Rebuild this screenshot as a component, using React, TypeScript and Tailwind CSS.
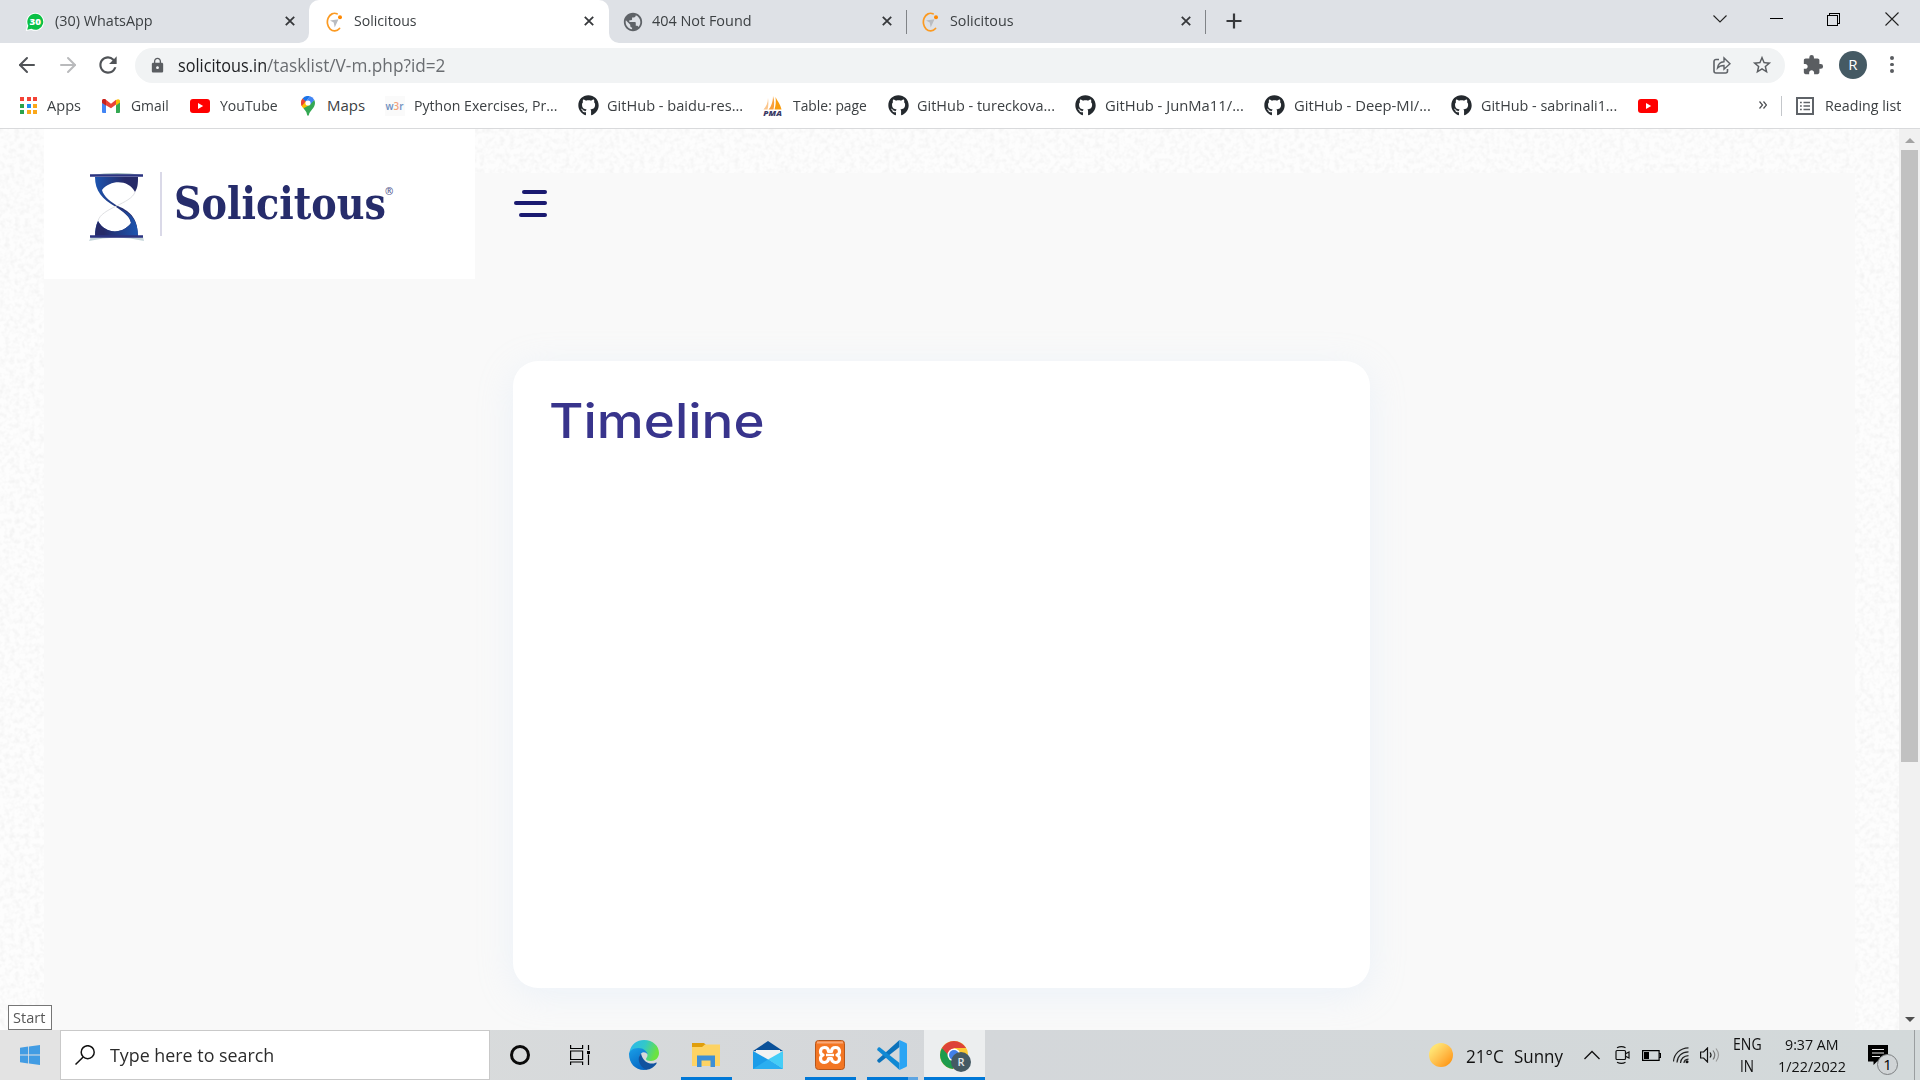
import React, { useLayoutEffect, useRef, type ReactNode } from "react";
import { ArrowLeft, ArrowRight } from "lucide-react";
import { FaGithub } from "react-icons/fa";
import { MdLock, MdStarBorder, MdExtension, MdRefresh, MdPublic } from "react-icons/md";

/** Single line of text stretched horizontally to fill the width of its box. */
function Fit({ children, className = "" }: { children: ReactNode; className?: string }) {
  const box = useRef<HTMLDivElement>(null);
  const text = useRef<HTMLSpanElement>(null);
  useLayoutEffect(() => {
    const apply = () => {
      if (!box.current || !text.current) return;
      const ratio = box.current.clientWidth / text.current.offsetWidth;
      text.current.style.transform = `scaleX(${ratio})`;
    };
    apply();
    document.fonts?.ready.then(apply);
  }, []);
  return (
    <div ref={box} className={`shrink-0 whitespace-nowrap ${className}`}>
      <span ref={text} className="inline-block origin-left">
        {children}
      </span>
    </div>
  );
}

const WhatsAppIcon = () => (
  <svg viewBox="0 0 20 20" className="size-5">
    <path d="M10.3 0.8a9 9 0 0 0-8.2 12.800L0.800 19l5.400-1.100A9 9 0 1 0 10.300 0.800z" fill="#fff" />
    <path d="M10.300 1.800a8 8 0 0 0-7 11.900L2.200 17.800l4.200-1A8 8 0 1 0 10.300 1.800z" fill="#0ac045" />
    <text x="10.300" y="13" textAnchor="middle" fontFamily="Open Sans, sans-serif" fontWeight="800" fontSize="9.500" textLength="11.500" lengthAdjust="spacingAndGlyphs" fill="#fff">30</text>
  </svg>
);

const SolicitousIcon = () => (
  <svg viewBox="0 0 18 20" className="h-5 w-[18px]">
    <path d="M13.500 16.500A7.200 8.800 0 1 1 11 1.800" fill="none" stroke="#fb9a22" strokeWidth="1.700" strokeLinecap="round" />
    <circle cx="14" cy="5.300" r="2" fill="#ff8800" />
    <path d="M4 8.500l8.500-1.200-3.800 8.200-1-5z" fill="#b9bcc1" />
  </svg>
);

const CloseX = () => (
  <svg viewBox="0 0 10 10" className="size-[10px]">
    <path d="M0.800 0.800l8.400 8.400M9.200 0.800L0.800 9.200" stroke="#36383b" strokeWidth="1.800" />
  </svg>
);

const GmailIcon = () => (
  <svg viewBox="0 0 18 14" className="h-[14px] w-[18px]">
    <path d="M0 2v11a1 1 0 0 0 1 1h3V5z" fill="#4285f4" />
    <path d="M18 2v11a1 1 0 0 1-1 1h-3V5z" fill="#34a853" />
    <path d="M0 2C0 0 2 -0.500 3.600 0.600L9 4.800l5-4v4.600L9 9.300 0 4z" fill="#ea4335" />
    <path d="M0 2C0 0.500 1.500-0.200 3-0.100L4 1v5.400L0 3.600z" fill="#c5221f" />
    <path d="M14 1c2-1.600 4-0.700 4 1v1.600l-4 3z" fill="#fbbc04" />
  </svg>
);

const YouTubeIcon = () => (
  <svg viewBox="0 0 20 14" className="h-[14px] w-5">
    <rect width="20" height="14" rx="3" fill="#f00" />
    <path d="M8 4v6l5.200-3z" fill="#fff" />
  </svg>
);

const MapsIcon = () => (
  <svg viewBox="0 0 14 20" className="h-5 w-[14px]">
    <path d="M2 11.500C3.500 14 5.500 15 6 18.500c.300 1.600 1.700 1.600 2 0C8.500 15 14 12 14 7c0-1.200-.300-2.200-.700-3.100z" fill="#34a853" />
    <path d="M1.400 2.800A7 7 0 0 0 0 7c0 1.800.800 3.300 2 4.600L7 7z" fill="#fbbc04" />
    <path d="M1.600 2.500A7 7 0 0 0 .800 10.200L5 5z" fill="#ea4335" />
    <path d="M1.600 2.500A7 7 0 0 1 9 .300L4.800 5.400z" fill="#1a73e8" />
    <path d="M9 .300a7 7 0 0 1 4.300 3.600L9 8.800 5 5z" fill="#4285f4" />
    <path d="M.900 10.200a12 12 0 0 0 1.600 2L9 8.700 5 5.200z" fill="#fbbc04" />
    <circle cx="7" cy="7" r="2.600" fill="#fff" />
  </svg>
);

const AppsIcon = () => (
  <div className="grid h-[17px] w-[17px] grid-cols-3 grid-rows-3 gap-[2.500px]">
    <i className="bg-[#f44336]" /><i className="bg-[#f44336]" /><i className="bg-[#f44336]" />
    <i className="bg-[#2ba24c]" /><i className="bg-[#1e8cf5]" /><i className="bg-[#fba81a]" />
    <i className="bg-[#2ba24c]" /><i className="bg-[#fba81a]" /><i className="bg-[#fba81a]" />
  </div>
);

const W3rIcon = () => (
  <svg viewBox="0 0 20 20" className="size-5">
    <rect width="20" height="20" fill="#fafafa" />
    <text x="0.500" y="13.500" fontFamily="Open Sans, sans-serif" fontWeight="600" fontSize="10.500" textLength="18" lengthAdjust="spacingAndGlyphs" fill="#6d8fc0">
      w<tspan fill="#f2a27c">3</tspan>r
    </text>
  </svg>
);

const PmaIcon = () => (
  <svg viewBox="0 0 20 22" className="h-[22px] w-5">
    <path d="M5 3C5 8 3 12 0.500 14.500h4C5.500 11 5.600 7 5 3z" fill="#fbc58b" />
    <path d="M10 1C10 7 8 12 5.500 14.500h5C11.500 10 11.500 5 10 1z" fill="#f9a03c" />
    <path d="M12.500 2c2 4.500 4.500 6 6 12.500h-7c1.300-4 1.600-8 1-12.500z" fill="#f89c0e" />
    <text x="0.300" y="20.500" fontFamily="Open Sans, sans-serif" fontWeight="800" fontStyle="italic" fontSize="7.500" textLength="18.500" lengthAdjust="spacingAndGlyphs" fill="#3b3b66">PMA</text>
  </svg>
);

const GitHubIcon = () => <FaGithub className="size-[21px] -mr-px text-[#24292e]" />;

type Tab = { icon: ReactNode; title: string; cell: string; text: string; close: string };
const tabs: Tab[] = [
  { icon: <WhatsAppIcon />, title: "(30) WhatsApp", cell: "w-[309px] pl-[25px]", text: "ml-[10px] w-[98px]", close: "mr-[14px]" },
  { icon: <SolicitousIcon />, title: "Solicitous", cell: "w-[300px] rounded-t-[10px] bg-white pl-[17px]", text: "ml-[10px] w-[63px]", close: "mr-[15px]" },
  { icon: <MdPublic className="-ml-px size-[22px] text-[#5f6368]" />, title: "404 Not Found", cell: "w-[297px] pl-[14px]", text: "ml-[8px] w-[100px]", close: "mr-[14px]" },
  { icon: <SolicitousIcon />, title: "Solicitous", cell: "w-[299px] pl-[16px]", text: "ml-[10px] w-[64px]", close: "mr-[14px]" },
];

type Bookmark = { icon: ReactNode; label: string; cell: string; text: string };
const bookmarks: Bookmark[] = [
  { icon: <AppsIcon />, label: "Apps", cell: "w-[82px]", text: "ml-[10px] w-[34px]" },
  { icon: <GmailIcon />, label: "Gmail", cell: "w-[88px]", text: "ml-[11px] w-[38px]" },
  { icon: <YouTubeIcon />, label: "YouTube", cell: "w-[111px]", text: "ml-[10px] w-[58px]" },
  { icon: <MapsIcon />, label: "Maps", cell: "w-[84px]", text: "ml-[12px] w-[38px]" },
  { icon: <W3rIcon />, label: "Python Exercises, Pr...", cell: "w-[193px]", text: "ml-[9px] w-[143px]" },
  { icon: <GitHubIcon />, label: "GitHub - baidu-res...", cell: "w-[185px]", text: "ml-[9px] w-[136px]" },
  { icon: <PmaIcon />, label: "Table: page", cell: "w-[125px]", text: "ml-[10px] w-[74px]" },
  { icon: <GitHubIcon />, label: "GitHub - tureckova...", cell: "w-[187px]", text: "ml-[9px] w-[138px]" },
  { icon: <GitHubIcon />, label: "GitHub - JunMa11/...", cell: "w-[189px]", text: "ml-[10px] w-[139px]" },
  { icon: <GitHubIcon />, label: "GitHub - Deep-MI/...", cell: "w-[187px]", text: "ml-[10px] w-[137px]" },
  { icon: <GitHubIcon />, label: "GitHub - sabrinali1...", cell: "w-[187px]", text: "ml-[10px] w-[136px]" },
];

function TabStrip() {
  return (
    <div className="flex h-[43px] bg-[#dee1e6]">
      {tabs.map((t, i) => (
        <React.Fragment key={i}>
          <div className={`relative flex items-center ${t.cell}`}>
            {t.icon}
            <Fit className={`pb-[3px] leading-[40px] ${t.text}`}>{t.title}</Fit>
            <span className={`ml-auto pb-px ${t.close}`}><CloseX /></span>
            {i === 1 && (
              <>
                <svg viewBox="0 0 10 10" className="absolute -left-[10px] bottom-0 size-[10px]"><path d="M10 0v10H0A10 10 0 0 0 10 0z" fill="#fff" /></svg>
                <svg viewBox="0 0 10 10" className="absolute -right-[10px] bottom-0 size-[10px]"><path d="M0 0v10h10A10 10 0 0 1 0 0z" fill="#fff" /></svg>
              </>
            )}
          </div>
          {i > 1 && <div className="-mr-px mt-[10px] h-6 w-px bg-[#808387]" />}
        </React.Fragment>
      ))}
      <svg viewBox="0 0 16 16" className="ml-[21px] mt-[13px] size-4"><path d="M8 0.500v15M0.500 8h15" stroke="#36383b" strokeWidth="2.200" /></svg>
      <div className="ml-auto mr-[21px] flex h-[38px] items-center gap-[44px]">
        <svg viewBox="0 0 14 14" className="mr-[-1px] size-[14px]"><path d="M0.500 3.500L7 10l6.500-6.500" fill="none" stroke="#222" strokeWidth="1.100" /></svg>
        <svg viewBox="0 0 13 14" className="h-[14px] w-[13px]"><path d="M0 6.500h13" stroke="#000" /></svg>
        <svg viewBox="0 0 14 14" className="h-[14px] w-[14px] [shape-rendering:crispEdges]"><path d="M0.500 3.500h10v10h-10zM2.500 3V1.500h10v10H11" fill="none" stroke="#000" /></svg>
        <svg viewBox="0 0 14 14" className="size-[14px]"><path d="M0.500 0.500l13 13M13.500 0.500l-13 13" stroke="#222" strokeWidth="1.100" /></svg>
      </div>
    </div>
  );
}

function AddressBar() {
  return (
    <div className="flex h-[45px] items-center pl-[15px]">
      <ArrowLeft className="mb-[2px] size-[24px] text-[#505357]" strokeWidth={2} />
      <ArrowRight className="mb-[2px] ml-[17px] size-[24px] text-[#b9babc]" strokeWidth={2} />
      <MdRefresh className="mb-[2px] ml-[15px] size-[26px] text-[#505357]" />
      <div className="ml-[14px] flex h-[35px] w-[1650px] items-center rounded-full bg-[#f1f3f4] pl-[14px]">
        <MdLock className="size-[17px] text-[#5a5d61]" />
        <div className="ml-[12px] flex pb-px text-[17.500px] leading-[34px]">
          <Fit className="w-[89px] text-[#202124]">solicitous.in</Fit>
          <Fit className="w-[178px] text-[#6a6d71]">/tasklist/V-m.php?id=2</Fit>
        </div>
        <svg viewBox="0 0 18 18" className="mb-[2px] ml-auto size-[18px]" fill="none" stroke="#5f6368" strokeWidth="1.600">
          <path d="M6 3.500H3a2 2 0 0 0-2 2v9.500a2 2 0 0 0 2 2h9.500a2 2 0 0 0 2-2V13" />
          <path d="M4.500 12c.500-4 2.500-6 6.500-6.300V2l6 5.700-6 5.500V9.500C8 9.500 6 10.300 4.500 12z" strokeWidth="1.400" />
        </svg>
        <MdStarBorder className="mb-px ml-[20px] mr-[12px] size-[22px] text-[#5a5d61]" />
      </div>
      <MdExtension className="mb-px ml-[17px] size-[22px] text-[#5a5d61]" />
      <div className="mb-[2px] ml-[15px] flex size-[28px] items-center justify-center rounded-full bg-[#455a64] text-[15px] text-white">R</div>
      <div className="mb-[2px] ml-[23px] flex flex-col gap-[3px]">
        <i className="size-[3.500px] rounded-full bg-[#5a5d61]" />
        <i className="size-[3.500px] rounded-full bg-[#5a5d61]" />
        <i className="size-[3.500px] rounded-full bg-[#5a5d61]" />
      </div>
    </div>
  );
}

function BookmarksBar() {
  return (
    <div className="flex h-[41px] items-center border-b border-[#d9dadc] pb-[5px] pl-[20px] text-[#3c4043]">
      {bookmarks.map((b) => (
        <div key={b.label} className={`flex h-[22px] shrink-0 items-center ${b.cell}`}>
          {b.icon}
          <Fit className={`pb-[2px] leading-5 ${b.text}`}>{b.label}</Fit>
        </div>
      ))}
      <YouTubeIcon />
      <svg viewBox="0 0 8 8" className="mb-[2px] ml-[101px] size-2"><path d="M0.500 0.500L3.500 4l-3 3.500M4.500 0.500L7.500 4l-3 3.500" fill="none" stroke="#4a4d51" strokeWidth="1.200" /></svg>
      <div className="ml-[14px] h-5 w-px bg-[#c4c7cb]" />
      <svg viewBox="0 0 18 18" className="ml-[14px] size-[18px]" fill="none" stroke="#5f6368">
        <rect x="1" y="1" width="16" height="16" strokeWidth="2" />
        <path d="M4 5.500h1.800M4 9h1.800M4 12.500h1.800M7.500 5.500H14M7.500 9H14M7.500 12.500H14" strokeWidth="1.700" />
      </svg>
      <Fit className="ml-[11px] w-[76px] pb-[2px] leading-5">Reading list</Fit>
    </div>
  );
}

function Logo() {
  return (
    <div className="flex h-[150px] w-[431px] shrink-0 bg-white pl-[45px] pt-[43px]">
      <svg viewBox="0 0 56 70" className="h-[70px] w-[56px]">
        <defs>
          <linearGradient id="top"><stop offset="0" stopColor="#1c55b0" /><stop offset="0.700" stopColor="#262a68" /></linearGradient>
          <linearGradient id="bottom"><stop offset="0.200" stopColor="#262a68" /><stop offset="1" stopColor="#1c55b0" /></linearGradient>
        </defs>
        <path d="M2 3Q28-1 54 3z" fill="#9db8bb" />
        <path d="M0 69l2-4h52l1 4Q28 62 0 69z" fill="#c5d6da" />
        <path d="M6 5h43c0 6 0 10-3 15-6-12-24-13-33-2 1 6 10 13 16 16 14 6 20 14 20 31H6c0-7 1-12 3-16 8 14 25 13 33 2-1-7-9-12-15-16C13 27 6 19 6 5z" fill="url(#top)" />
        <path d="M6 65c0-7 1-12 3-16 8 14 25 13 33 2-1-7-7-11-12-14.500C43 41 49 49 49 65z" fill="url(#bottom)" />
        <path d="M46 20C42 32 12 36 9 49" fill="none" stroke="#dfe0e3" />
        <path d="M1 3.500h53M1 64.500h53" stroke="#2c3481" strokeWidth="2.400" />
      </svg>
      <div className="ml-[15px] h-[64px] w-[2px] bg-[#dad9e8]" />
      <Fit className="ml-[12px] w-[212px] pt-[6px] font-['DejaVu_Serif'] text-[45px] font-bold leading-[52px] text-[#262c6b]">Solicitous</Fit>
      <div className="-ml-px pt-[13px] text-[10px] font-semibold leading-[13px] text-[#50548a]">®</div>
    </div>
  );
}

function Page() {
  return (
    <main className="flex h-[901px] overflow-hidden">
      <div className="relative flex-1 bg-[#fdfdfd]">
        <svg className="absolute inset-0 size-full">
          <filter id="grain" x="0" y="0" width="100%" height="100%">
            <feTurbulence type="fractalNoise" baseFrequency="0.200" numOctaves="2" seed="4" />
            <feColorMatrix values="0 0 0 0 0  0 0 0 0 0  0 0 0 0 0  0.080 0 0 0 -0.032" />
          </filter>
          <rect width="100%" height="100%" filter="url(#grain)" />
        </svg>
        <div className="relative mx-[44px] flex h-full flex-col">
          <div className="flex h-[150px]">
            <Logo />
            <div className="mt-[44px] flex flex-1 flex-col bg-[#f9f9f9] pl-[39px] pt-[17px]">
              <div className="flex w-[33px] flex-col items-end gap-[7px]">
                <i className="h-[4px] w-[25px] rounded-full bg-[#1a1a70]" />
                <i className="h-[4px] w-[33px] rounded-full bg-[#1a1a70]" />
                <i className="mt-px h-[4px] w-[28px] rounded-full bg-[#1a1a70]" />
              </div>
            </div>
          </div>
          <div className="flex-1 bg-[#f9f9f9] pl-[469px] pt-[82px]">
            <section className="h-[627px] w-[857px] rounded-[25px] bg-white pl-[36px] pt-[25px] shadow-[0_7px_35px_rgba(200,225,250,0.250)]">
              <Fit className="w-[216px] font-['Inter'] text-[48px] font-medium leading-[69px] text-[#38348c]">Timeline</Fit>
            </section>
          </div>
        </div>
      </div>
      <div className="flex w-[21px] flex-col items-center bg-[#f1f1f1]">
        <svg viewBox="0 0 10 5" className="mt-[9px] h-[5px] w-[10px]"><path d="M5 0l5 5H0z" fill="#a3a3a3" /></svg>
        <div className="mt-[7px] h-[612px] w-[17px] bg-[#c1c1c1]" />
        <svg viewBox="0 0 10 5" className="mb-[8px] mt-auto h-[5px] w-[10px]"><path d="M0 0h10L5 5z" fill="#505050" /></svg>
      </div>
    </main>
  );
}

const EdgeIcon = () => (
  <svg viewBox="0 0 30 30" className="size-[30px]">
    <defs>
      <linearGradient id="edgeA" x1="0" y1="0" x2="1" y2="0.300"><stop offset="0" stopColor="#2bb6f0" /><stop offset="0.550" stopColor="#33c8c8" /><stop offset="1" stopColor="#6be33f" /></linearGradient>
      <linearGradient id="edgeB" x1="0" y1="0" x2="0.500" y2="1"><stop offset="0" stopColor="#1aa0e8" /><stop offset="1" stopColor="#0668c4" /></linearGradient>
    </defs>
    <path d="M0.500 12C2 4 8 0 15 0c9 0 15 6 15 13 0 5-4 8-8 8-3.500 0-5-1-5-2 0-1 1.500-1.600 1.500-4C18.500 12 15 9 10 9c-4 0-8 1.500-9.500 3z" fill="url(#edgeA)" />
    <path d="M0 14c0-3 4-6 9.500-6 5 0 9 3.500 9 6.500C17 12 14 11.500 12 13.500c-4 4-1.500 13 7 15.500-1.300.700-2.700 1-4 1C6 30 0 23 0 14z" fill="url(#edgeB)" />
    <path d="M12 13.500C8 17 9 26 17 29.700c5 0 8.500-3 10.500-6.200.500-.800-.200-1.200-.800-.800C22 25 14 23 12 13.500z" fill="#10529f" />
  </svg>
);

const FolderIcon = () => (
  <svg viewBox="0 0 28 24" className="h-6 w-7">
    <path d="M0 0h12l2 2v3H0z" fill="#e09e0c" />
    <path d="M0 4h10l3-2.500h15V23H0z" fill="#fdd364" />
    <path d="M5 24V12.500h18V24h-4.500v-6.500h-9V24z" fill="#3d8fd6" />
  </svg>
);

const MailIcon = () => (
  <svg viewBox="0 0 30 28" className="h-7 w-[30px]">
    <path d="M0 10L15 0l15 10z" fill="#0a5199" />
    <path d="M3 9h24v10H3z" fill="#f2f2f2" />
    <path d="M0 10l15 8.500L30 28H0z" fill="#1b9ce8" />
    <path d="M30 10v18L15 18.500z" fill="#45cdf7" />
    <path d="M0 28l15-9.500L30 28z" fill="#2aaef0" />
  </svg>
);

const XamppIcon = () => (
  <svg viewBox="0 0 30 30" className="size-[30px]">
    <rect x="0.500" y="0.500" width="29" height="29" rx="3" fill="#f37623" stroke="#b5561c" />
    <path d="M2 2.500h26" stroke="#f8a878" strokeWidth="2" />
    <path d="M9.500 7.500c3 0 4 2 4 4h3c0-2 1-4 4-4s4 2 4 4-1 3-2.500 3.500c1.500.500 2.500 2 2.500 3.700 0 2-1.500 3.800-4 3.800s-4-2-4-4h-3c0 2-1.500 4-4 4s-4-1.800-4-3.800c0-1.700 1-3.200 2.500-3.700-1.500-.500-2.500-1.800-2.500-3.500s1-4 4-4z" fill="none" stroke="#fff" strokeWidth="3.200" strokeLinejoin="round" />
    <path d="M11 15h8" stroke="#fff" strokeWidth="2.500" />
  </svg>
);

const VsCodeIcon = () => (
  <svg viewBox="0 0 30 30" className="size-[30px]">
    <path d="M22.500 7L3 22.500c-.600.400-1 .300-1.500-.100L0.500 21.500c-.500-.500-.500-1.200 0-1.700L22.500 0z" fill="#0b72bb" />
    <path d="M22.500 23L3 7.500c-.600-.400-1-.300-1.500.100L0.500 8.500c-.500.500-.500 1.200 0 1.700L22.500 30z" fill="#1089d4" />
    <path d="M22.500 0L29 3c.600.300 1 .800 1 1.500v21c0 .700-.400 1.200-1 1.500l-6.500 3z" fill="#2aa4f4" />
  </svg>
);

const ChromeIcon = () => (
  <svg viewBox="0 0 32 32" className="size-8">
    <circle cx="14" cy="15" r="14" fill="#fcc934" />
    <path d="M14 15L1.900 8A14 14 0 0 0 13 29z" fill="#1e9c4d" />
    <path d="M1.900 8a14 14 0 0 1 24.200 0H14l-5 8z" fill="#dd4338" />
    <circle cx="14" cy="15" r="6.500" fill="#fff" />
    <circle cx="14" cy="15" r="5" fill="#4280ea" />
    <circle cx="21" cy="22" r="10" fill="#455a64" />
    <text x="21" y="26" textAnchor="middle" fontFamily="Open Sans, sans-serif" fontWeight="600" fontSize="11" fill="#e3e7e9">R</text>
  </svg>
);

function Taskbar() {
  return (
    <footer className="relative flex h-[50px] bg-linear-to-r from-[#dcdedd] via-[#d4d7da] to-[#d3d9da]">
      <div className="absolute -top-[25px] left-[8px] flex h-[25px] w-[44px] items-center border border-[#767676] bg-white pl-[4px] text-[#575757]">
        <Fit className="w-[32px]">Start</Fit>
      </div>
      <div className="flex w-[60px] items-center justify-center bg-[#e3e3e3]">
        <svg viewBox="0 0 20 20" className="size-5" fill="#429ce3"><path d="M0 2.800L8.200 1.600v7.900H0zM9 1.500L20 0v9.500H9zM0 10.400h8.200v8L0 17.200zM9 10.400h11V20L9 18.500z" /></svg>
      </div>
      <div className="flex w-[430px] items-center border border-[#c9c9c9] bg-white pl-[14px] text-[18.500px] text-[#2b2b2b]">
        <svg viewBox="0 0 20 20" className="size-5" fill="none" stroke="#111" strokeWidth="1.500"><circle cx="12.700" cy="7.200" r="6.500" /><path d="M8.200 12L0.500 19.500" /></svg>
        <Fit className="ml-[15px] w-[164px] leading-[46px]">Type here to search</Fit>
      </div>
      <div className="flex w-[60px] items-center justify-center"><i className="size-5 rounded-full border-[3px] border-[#0a0a0a]" /></div>
      <div className="flex w-[60px] items-center justify-center">
        <svg viewBox="0 0 20 20" className="size-5" fill="none" stroke="#000" strokeWidth="1.200">
          <path d="M0.600 0v3.500h12V0M0.600 6h12v8.500h-12zM0.600 20v-3h12v3M18.500 0v5M18.500 9.500V20" />
          <rect x="17" y="6" width="3" height="3" fill="#000" stroke="none" />
        </svg>
      </div>
      <div className="flex w-[68px] items-center justify-center"><EdgeIcon /></div>
      <div className="ml-[3px] flex w-[51px] items-center justify-center border-b-[3px] border-[#0078d7] pr-[2px] pt-[2px]"><FolderIcon /></div>
      <div className="flex w-[73px] items-center justify-center pr-[2px]"><MailIcon /></div>
      <div className="flex w-[51px] items-center justify-center border-b-[3px] border-[#0078d7] pr-px pt-[3px]"><XamppIcon /></div>
      <div className="ml-[11px] flex w-[51px] flex-col">
        <div className="flex flex-1 items-center justify-center pr-[2px] pt-[3px]"><VsCodeIcon /></div>
        <div className="flex h-[3px]"><i className="w-[41px] bg-[#0078d7]" /><i className="w-[10px] bg-[#5ea5e2]" /></div>
      </div>
      <div className="ml-[6px] flex w-[61px] items-center border-b-[3px] border-[#0078d7] bg-[#eceeef] pl-[16px] pt-[5px]"><ChromeIcon /></div>

      <div className="ml-auto flex items-center text-[18px] text-[#111]">
        <i className="size-6 rounded-full bg-linear-135 from-[#ffe372] from-20% to-[#fd9500] to-90%" />
        <Fit className="ml-[13px] mt-[3px] w-[38px]">21°C</Fit>
        <Fit className="ml-[10px] mt-[3px] w-[49px]">Sunny</Fit>
        <svg viewBox="0 0 16 10" className="ml-[21px] h-[10px] w-4"><path d="M0.500 9L8 1.500 15.500 9" fill="none" stroke="#111" strokeWidth="1.300" /></svg>
        <svg viewBox="0 0 16 18" className="ml-[15px] h-[18px] w-4" fill="none" stroke="#111" strokeWidth="1.200">
          <rect x="1" y="4.500" width="9.500" height="9" rx="1" /><path d="M10.500 7.800l3.500-1.800v6l-3.500-1.800M2 1.800q4.500-2.300 8.500 0M2 16.200q4.500 2.300 8.500 0" />
        </svg>
        <svg viewBox="0 0 19 11" className="ml-[11px] h-[11px] w-[19px]"><path d="M0.600 0.600h16.500v9.800H0.600zM17 3.500h1.500v4H17" fill="none" stroke="#000" strokeWidth="1.200" /><path d="M2 2h5v7H2z" /></svg>
        <svg viewBox="0 0 17 17" className="ml-[12px] size-[17px]" fill="none" stroke="#222" strokeWidth="1.200">
          <path d="M0.500 14.500C1 7 7 1 15.500 0.800M4 15.500C4.500 9 9 5 15.500 4.800M7.500 16C8 11.500 10.500 9 15.500 8.700M11 16c0-2 1.500-3.500 4.500-3.800" /><circle cx="14" cy="14.800" r="1.500" fill="#111" stroke="none" />
        </svg>
        <svg viewBox="0 0 21 16" className="ml-[10px] h-4 w-[21px]" fill="none" stroke="#111" strokeWidth="1.200">
          <path d="M0.600 5h3L7.500 1v14l-3.900-4h-3zM10 5.500q2 2.500 0 5" /><path d="M13 3.500q3.500 4.500 0 9" stroke="#777" /><path d="M16 1.500q5 6.500 0 13" stroke="#999" />
        </svg>
        <div className="ml-[12px] flex w-[28px] flex-col items-center text-[15.500px] leading-[22px]">
          <Fit className="w-[29px]">ENG</Fit>
          <Fit className="w-[14px]">IN</Fit>
        </div>
        <div className="ml-[17px] flex w-[68px] flex-col items-center pb-px text-[15px] leading-[22px]">
          <Fit className="w-[54px]">9:37 AM</Fit>
          <Fit className="w-[68px]">1/22/2022</Fit>
        </div>
        <div className="relative ml-[22px] h-[30px] w-[30px]">
          <svg viewBox="0 0 20 20" className="absolute left-0 top-[5px] size-5"><path d="M0 0h20v16.500H9L5.500 20v-3.500H0z" /><path d="M4 4.500h12M4 8h12M4 11.500h8" stroke="#e8e8e8" strokeWidth="1.100" /></svg>
          <div className="absolute left-[9px] top-[14px] flex size-[21px] items-center justify-center rounded-full border border-[#7d8082] bg-[#d0d4d6] text-[15px] text-black">1</div>
        </div>
        <div className="ml-[16px] mr-[5px] h-[50px] w-px bg-[#9a9ea0]" />
      </div>
    </footer>
  );
}

export default function App() {
  return (
    <div className="h-[1080px] w-[1920px] overflow-hidden bg-white font-['Open_Sans',sans-serif] text-[15px] text-[#3c4043]">
      <header className="flex flex-col">
        <TabStrip />
        <AddressBar />
        <BookmarksBar />
      </header>
      <Page />
      <Taskbar />
    </div>
  );
}
